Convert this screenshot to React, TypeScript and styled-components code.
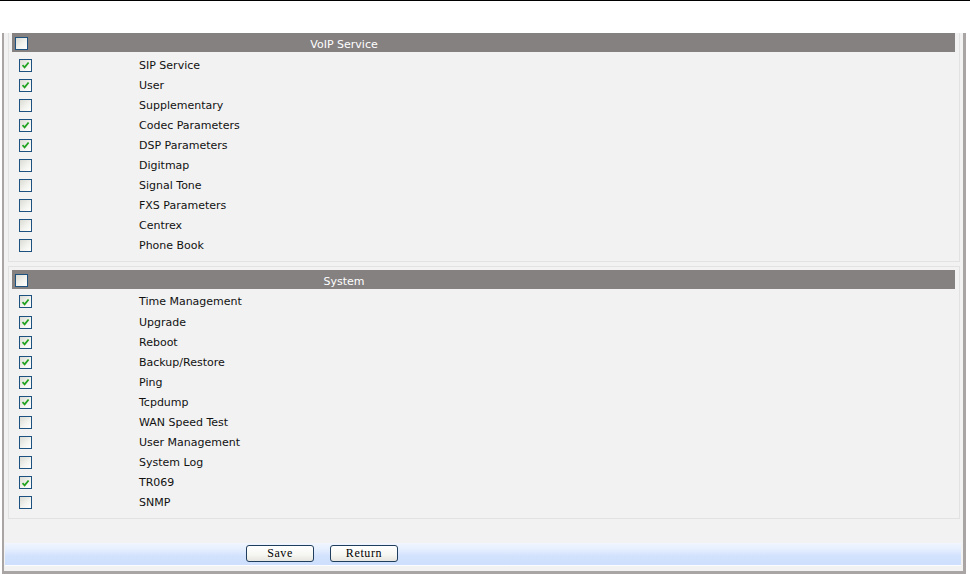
import React, { useState } from "react";
import styled, { createGlobalStyle } from "styled-components";

const GlobalStyle = createGlobalStyle`
  html, body { margin: 0; padding: 0; background: #ffffff; }
  body { font-family: "DejaVu Sans", Verdana, sans-serif; font-size: 11px; }
  #root { width: 970px; height: 574px; overflow: hidden; }
`;

const TopRule = styled.div`
  height: 1px;
  background: #000000;
`;

const TopSpace = styled.div`
  height: 32px;
  background: #ffffff;
`;

const Frame = styled.div`
  margin-left: 2px;
  width: 959px;
  height: 538px;
  background: #f2f2f2;
  border-left: 2px solid #a9a5a5;
  border-right: 3px solid #a9a5a5;
  border-bottom: 3px solid #a9a5a5;
  display: flex;
  flex-direction: column;
  overflow: hidden;
`;

const Section = styled.div<{ $first?: boolean }>`
  margin: ${(p) => (p.$first ? "0" : "4px")} 3px 0 4px;
  border: 1px solid #e2e2e2;
  border-top-width: ${(p) => (p.$first ? "0" : "1px")};
  padding: ${(p) => (p.$first ? "0" : "3px")} 4px 5px 3px;
`;

const Header = styled.div`
  height: 19px;
  background: #858181;
  color: #ffffff;
  display: grid;
  grid-template-columns: 127px 410px;
  align-items: center;
`;

const HeaderTitle = styled.span`
  text-align: center;
  line-height: 19px;
  padding-top: 2px;
`;

const HeaderBoxCell = styled.div`
  padding-left: 3px;
  display: flex;
  align-items: center;
`;

const Rows = styled.div`
  padding-top: 3px;
`;

const Row = styled.div`
  height: 20.1px;
  display: grid;
  grid-template-columns: 127px 1fr;
  align-items: center;
  color: #111111;
`;

const RowBoxCell = styled.div`
  padding-left: 7px;
  display: flex;
  align-items: center;
`;

const Box = styled.span<{ $size: number }>`
  box-sizing: border-box;
  width: ${(p) => p.$size}px;
  height: ${(p) => p.$size}px;
  border: 1px solid #1c5180;
  background: linear-gradient(135deg, #dcdcd6 0%, #f2f2ee 55%, #ffffff 100%);
  display: inline-flex;
  align-items: center;
  justify-content: center;
  cursor: default;
`;

const Footer = styled.div`
  margin: 24px 2px 0 1px;
  height: 22px;
  background: linear-gradient(to bottom, #f1f6ff 0%, #e4eefe 30%, #d2e2fd 60%, #cddffd 100%);
  border-bottom: 1px solid #fbfdff;
  display: flex;
  align-items: center;
  gap: 16px;
  padding-left: 241px;
`;

const Button = styled.button`
  box-sizing: border-box;
  width: 68px;
  height: 17px;
  padding: 0;
  border: 1px solid #1f3d5c;
  border-radius: 3px;
  background: linear-gradient(to bottom, #ffffff 0%, #f6f6f2 60%, #e6e5de 100%);
  font-family: "Liberation Serif", "Times New Roman", serif;
  font-size: 12px;
  font-weight: normal;
  color: #000000;
  line-height: 15px;
  letter-spacing: 0.6px;
`;

function CheckBox({ checked, size, onToggle }: { checked: boolean; size: number; onToggle: () => void }) {
  return (
    <Box $size={size} role="checkbox" aria-checked={checked} onClick={onToggle}>
      {checked && (
        <svg width="9" height="8" viewBox="0 0 9 8">
          <path d="M1.5 4.2 L3.6 6.3 L7.6 1.5" fill="none" stroke="#21a321" strokeWidth="1.8" />
        </svg>
      )}
    </Box>
  );
}

type Item = { label: string; checked: boolean };

const voip: Item[] = [
  { label: "SIP Service", checked: true },
  { label: "User", checked: true },
  { label: "Supplementary", checked: false },
  { label: "Codec Parameters", checked: true },
  { label: "DSP Parameters", checked: true },
  { label: "Digitmap", checked: false },
  { label: "Signal Tone", checked: false },
  { label: "FXS Parameters", checked: false },
  { label: "Centrex", checked: false },
  { label: "Phone Book", checked: false },
];

const system: Item[] = [
  { label: "Time Management", checked: true },
  { label: "Upgrade", checked: true },
  { label: "Reboot", checked: true },
  { label: "Backup/Restore", checked: true },
  { label: "Ping", checked: true },
  { label: "Tcpdump", checked: true },
  { label: "WAN Speed Test", checked: false },
  { label: "User Management", checked: false },
  { label: "System Log", checked: false },
  { label: "TR069", checked: true },
  { label: "SNMP", checked: false },
];

function PermissionSection({ title, items, first }: { title: string; items: Item[]; first?: boolean }) {
  const [state, setState] = useState(items.map((i) => i.checked));
  const [all, setAll] = useState(false);
  return (
    <Section $first={first}>
      <Header>
        <HeaderBoxCell>
          <CheckBox
            size={13}
            checked={all}
            onToggle={() => {
              const v = !all;
              setAll(v);
              setState(items.map(() => v));
            }}
          />
        </HeaderBoxCell>
        <HeaderTitle>{title}</HeaderTitle>
      </Header>
      <Rows>
        {items.map((it, i) => (
          <Row key={it.label}>
            <RowBoxCell>
              <CheckBox
                size={13}
                checked={state[i]}
                onToggle={() => setState(state.map((s, j) => (j === i ? !s : s)))}
              />
            </RowBoxCell>
            <span>{it.label}</span>
          </Row>
        ))}
      </Rows>
    </Section>
  );
}

export default function App() {
  return (
    <>
      <GlobalStyle />
      <TopRule />
      <TopSpace />
      <Frame>
        <PermissionSection title="VoIP Service" items={voip} first />
        <PermissionSection title="System" items={system} />
        <Footer>
          <Button>Save</Button>
          <Button>Return</Button>
        </Footer>
      </Frame>
    </>
  );
}
